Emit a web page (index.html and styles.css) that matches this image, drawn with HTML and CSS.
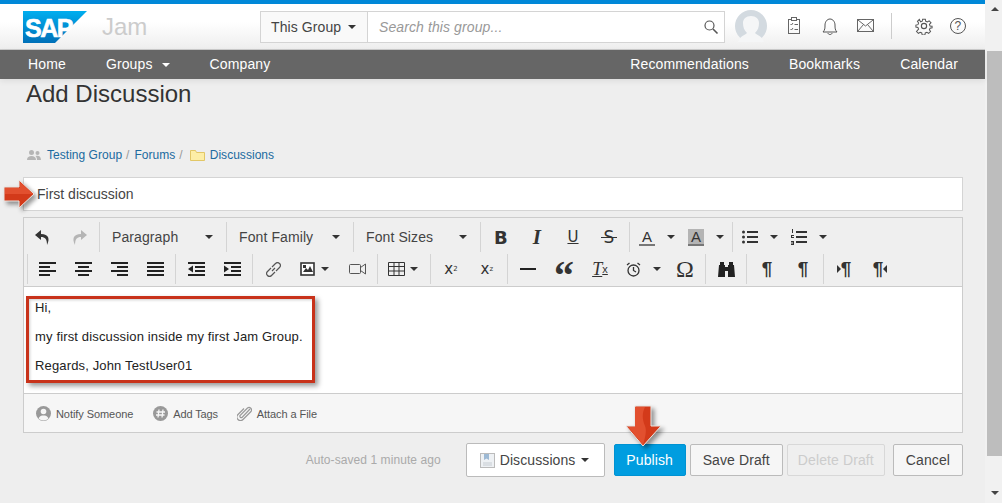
FILE: index.html
```html
<!DOCTYPE html>
<html lang="en">
<head>
    <meta charset="UTF-8">
    <meta name="viewport" content="width=device-width, initial-scale=1.0">
    <title>Add Discussion</title>
    <link rel="stylesheet" href="styles.css">
</head>
<body>
<div class="window">
    <div class="page">
        <header class="topbar">
            <svg class="logo" width="64" height="32" viewBox="0 0 64 32">
                <defs>
                    <linearGradient id="sapblue" x1="0" y1="0" x2="0" y2="1">
                        <stop offset="0" stop-color="#00aeef"/>
                        <stop offset="1" stop-color="#0070b8"/>
                    </linearGradient>
                </defs>
                <polygon points="0,0 64,0 32,32 0,32" fill="url(#sapblue)"/>
                <text x="2" y="26" class="logo-text">SAP</text>
            </svg>
            <span class="brand">Jam</span>
            <div class="search">
                <div class="search-scope">This Group <span class="caret"></span></div>
                <div class="search-input">
                    <span>Search this group...</span>
                    <svg width="16" height="16" viewBox="0 0 16 16" fill="none" stroke="#555" stroke-width="1.2"><circle cx="6.5" cy="6.5" r="4.5"/><path d="M10 10l4.5 4.5" stroke-width="1.6"/></svg>
                </div>
            </div>
            <svg class="avatar" width="32" height="32" viewBox="0 0 32 32">
                <circle cx="16" cy="16" r="16" fill="#d3dae0"/>
                <path d="M3 32c2-6 7-7 9-9-3-3-4-6-4-10 0-4 3-7 8-7s8 3 8 7c0 4-1 7-4 10 2 2 7 3 9 9z" fill="#f5f6f7"/>
            </svg>
            <div class="top-icons">
                <svg class="ti-clip" width="14" height="18" viewBox="0 0 14 18" fill="none" stroke="#666"><rect x="1.5" y="2.5" width="11" height="14"/><rect x="4.5" y="0.5" width="5" height="3" fill="#fff"/><path d="M3.5 7l1 1 1.5-2M3.5 12l1 1 1.5-2M7.5 7.5h3.500M7.5 12.500h3.500"/></svg>
                <svg class="ti-bell" width="16" height="18" viewBox="0 0 16 18" fill="none" stroke="#555"><path d="M1 15c2-2 2-4 2-7 0-3 2-6 5-6s5 3 5 6c0 3 0 5 2 7z"/><path d="M6 16c0 2 4 2 4 0"/></svg>
                <svg class="ti-mail" width="17" height="13" viewBox="0 0 17 13" fill="none" stroke="#666"><rect x="0.500" y="0.500" width="16" height="12"/><path d="M1 1l7.500 6 7.500-6M1 12l5.500-6.500M16 12l-5.500-6.500"/></svg>
                <span class="ti-sep"></span>
                <svg class="ti-gear" width="18" height="18" viewBox="0 0 24 24" fill="none" stroke="#555" stroke-width="1.500"><circle cx="12" cy="12" r="3.500"/><path d="M10 2h4l.6 3 2.400 1 2.600-1.700 2.800 2.800L20 9.700l1 2.300 3 .6v-1 3l-3 .6-1 2.400 1.700 2.600-2.800 2.800-2.600-1.700-2.400 1-.6 3h-4l-.6-3-2.400-1-2.600 1.700-2.800-2.800L4 16.600l-1-2.400-3-.6v-3l3-.6 1-2.300-1.700-2.600 2.800-2.800L7 5.900l2.400-1z" transform="translate(1.200 1.200) scale(.9)"/></svg>
                <svg class="ti-help" width="16" height="16" viewBox="0 0 16 16" fill="none" stroke="#555"><circle cx="8" cy="8" r="7.500"/><text x="8" y="12" class="help-mark">?</text></svg>
            </div>
        </header>
        <nav class="navbar">
            <a>Home</a>
            <a>Groups <span class="caret caret-white"></span></a>
            <a>Company</a>
            <span class="nav-fill"></span>
            <a>Recommendations</a>
            <a>Bookmarks</a>
            <a>Calendar</a>
        </nav>

        <main class="content">
            <h1>Add Discussion</h1>
            <div class="crumbs">
                <svg width="14" height="10" viewBox="0 0 14 10" fill="#b5b5b5"><circle cx="4.500" cy="2.500" r="2.500"/><path d="M0 10c0-3 2-4 4.500-4S9 7 9 10z"/><circle cx="10.500" cy="3" r="2"/><path d="M10 10c0-2-.5-3-1.500-4 3-1 5.500 0 5.500 4z"/></svg>
                <a>Testing Group</a><span class="slash">/</span><a>Forums</a><span class="slash">/</span>
                <svg class="folder" width="15" height="11" viewBox="0 0 15 11"><path d="M.5 10.500V.5h5l1 2h8v8z" fill="#fdeea6" stroke="#e2c766"/></svg>
                <a>Discussions</a>
            </div>
            <input class="title-input" type="text" value="First discussion">

            <div class="editor">
                <div class="toolbar">
                    <div class="tb-row">
                        <div class="tb-group first">
                            <button class="tb-btn"><svg width="16" height="15" viewBox="0 0 16 15" fill="#333"><path d="M6 0L0 5l6 5V7c4 0 6 2 6 8 3-6 2-11-6-11z"/></svg></button>
                            <button class="tb-btn"><svg width="16" height="15" viewBox="0 0 16 15" fill="#b5b5b5"><path d="M10 0l6 5-6 5V7c-4 0-6 2-6 8-3-6-2-11 6-11z"/></svg></button>
                        </div>
                        <div class="tb-group"><button class="tb-select">Paragraph<span class="caret"></span></button></div>
                        <div class="tb-group"><button class="tb-select">Font Family<span class="caret"></span></button></div>
                        <div class="tb-group"><button class="tb-select">Font Sizes<span class="caret"></span></button></div>
                        <div class="tb-group">
                            <button class="tb-btn glyph bold">B</button>
                            <button class="tb-btn glyph italic">I</button>
                            <button class="tb-btn glyph under">U</button>
                            <button class="tb-btn glyph strike">S</button>
                        </div>
                        <div class="tb-group">
                            <div class="split"><button class="tb-btn"><span class="swatch">A</span></button><span class="caret"></span></div>
                            <div class="split"><button class="tb-btn"><span class="swatch shaded">A</span></button><span class="caret"></span></div>
                        </div>
                        <div class="tb-group">
                            <div class="split"><button class="tb-btn"><svg width="16" height="14" viewBox="0 0 16 14" fill="#333"><circle cx="1.500" cy="2" r="1.500"/><circle cx="1.500" cy="7" r="1.500"/><circle cx="1.500" cy="12" r="1.500"/><path d="M5 1h11v2H5zM5 6h11v2H5zM5 11h11v2H5z"/></svg></button><span class="caret"></span></div>
                            <div class="split"><button class="tb-btn"><svg width="16" height="16" viewBox="0 0 16 16" fill="#333"><path d="M5 2h11v2H5zM5 7h11v2H5zM5 12h11v2H5zM1 0h1v4H1zM0 6h3v1H1v1h2v1H0v-1zM0 12h3v4H0v-1h2v-.5H0v-1h2V13H0z"/></svg></button><span class="caret"></span></div>
                        </div>
                    </div>
                    <div class="tb-row">
                        <div class="tb-group indent">
                            <button class="tb-btn"><svg width="17" height="14" viewBox="0 0 17 14" fill="#222"><path d="M0 0h17v2H0zM0 4h11v2H0zM0 8h17v2H0zM0 12h11v2H0z"/></svg></button>
                            <button class="tb-btn"><svg width="17" height="14" viewBox="0 0 17 14" fill="#222"><path d="M0 0h17v2H0zM3 4h11v2H3zM0 8h17v2H0zM3 12h11v2H3z"/></svg></button>
                            <button class="tb-btn"><svg width="17" height="14" viewBox="0 0 17 14" fill="#222"><path d="M0 0h17v2H0zM6 4h11v2H6zM0 8h17v2H0zM6 12h11v2H6z"/></svg></button>
                            <button class="tb-btn"><svg width="17" height="14" viewBox="0 0 17 14" fill="#222"><path d="M0 0h17v2H0zM0 4h17v2H0zM0 8h17v2H0zM0 12h17v2H0z"/></svg></button>
                        </div>
                        <div class="tb-group">
                            <button class="tb-btn"><svg width="17" height="14" viewBox="0 0 17 14" fill="#222"><path d="M0 0h17v2H0zM7 4h10v2H7zM7 8h10v2H7zM0 12h17v2H0zM5 3.500v7L0 7z"/></svg></button>
                            <button class="tb-btn"><svg width="17" height="14" viewBox="0 0 17 14" fill="#222"><path d="M0 0h17v2H0zM7 4h10v2H7zM7 8h10v2H7zM0 12h17v2H0zM0 3.500v7L5 7z"/></svg></button>
                        </div>
                        <div class="tb-group">
                            <button class="tb-btn"><svg width="15" height="15" viewBox="0 0 15 15" fill="none" stroke="#555" stroke-width="1.200"><path d="M6 9l3-3M5 6L1.500 9.500a2.500 2.500 0 0 0 4 4L9 10M6 5l3.500-3.500a2.500 2.500 0 0 1 4 4L10 9"/></svg></button>
                            <div class="split tight"><button class="tb-btn"><svg width="15" height="14" viewBox="0 0 15 14"><rect x="1" y="1" width="13" height="12" fill="#fff" stroke="#333" stroke-width="1.600"/><path d="M3 10l3-4 2 2 2-4 3 6z" fill="#333"/><path d="M3 3h3v3H3z" fill="#333"/></svg></button><span class="caret"></span></div>
                            <button class="tb-btn"><svg width="17" height="12" viewBox="0 0 17 12" fill="none" stroke="#555"><rect x="0.500" y="1.500" width="11" height="9" rx="1"/><path d="M16.500 1l-5 3.500v3l5 3.500z"/></svg></button>
                        </div>
                        <div class="tb-group">
                            <div class="split tight"><button class="tb-btn"><svg width="17" height="14" viewBox="0 0 17 14" fill="none" stroke="#333"><path d="M.5 .5h16v13H.5zM.5 4.500h16M.5 9h16M6 .5v13M11 .5v13"/></svg></button><span class="caret"></span></div>
                        </div>
                        <div class="tb-group">
                            <button class="tb-btn glyph script">x<sup>2</sup></button>
                            <button class="tb-btn glyph script">x<sub>z</sub></button>
                        </div>
                        <div class="tb-group">
                            <button class="tb-btn"><svg width="16" height="2" viewBox="0 0 16 2" fill="#222"><path d="M0 0h16v2H0z"/></svg></button>
                            <button class="tb-btn glyph quote">&#8220;</button>
                            <button class="tb-btn glyph clear">T<span>x</span></button>
                            <div class="split"><button class="tb-btn"><svg width="15" height="15" viewBox="0 0 15 15" fill="none" stroke="#333" stroke-width="1.300"><circle cx="7.500" cy="8.500" r="5.500"/><path d="M7.500 5v3.500l2.500 1.500M1 3l2.500-2M14 3l-2.500-2"/></svg></button><span class="caret"></span></div>
                            <button class="tb-btn glyph omega">&#937;</button>
                        </div>
                        <div class="tb-group">
                            <button class="tb-btn"><svg width="17" height="15" viewBox="0 0 17 15" fill="#222"><path d="M2 0h4v3h1v2h3V3h1V0h4v3h1l1 12h-7V9H7v6H0L1 3h1z"/></svg></button>
                        </div>
                        <div class="tb-group">
                            <button class="tb-btn glyph pilcrow">&#182;</button>
                            <button class="tb-btn glyph pilcrow">&#182;</button>
                        </div>
                        <div class="tb-group">
                            <button class="tb-btn glyph pilcrow"><i class="dir-left"></i>&#182;</button>
                            <button class="tb-btn glyph pilcrow">&#182;<i class="dir-right"></i></button>
                        </div>
                    </div>
                </div>
                <div class="editor-body">
                    <p>Hi,</p>
                    <p>my first discussion inside my first Jam Group.</p>
                    <p>Regards, John TestUser01</p>
                    <div class="red-box"></div>
                </div>
                <div class="editor-foot">
                    <a class="foot-notify"><svg width="15" height="15" viewBox="0 0 15 15"><circle cx="7.500" cy="7.500" r="7.500" fill="#999"/><circle cx="7.500" cy="5.500" r="2.800" fill="#f6f6f6"/><path d="M2.500 12.500c1-2.500 3-3 5-3s4 .5 5 3a7 7 0 0 1-10 0z" fill="#f6f6f6"/></svg>Notify Someone</a>
                    <a class="foot-tags"><svg width="15" height="15" viewBox="0 0 15 15"><circle cx="7.500" cy="7.500" r="7.500" fill="#999"/><path d="M6 3.500L5 11.500M10 3.500l-1 8M3.500 6h8.500M3 9h8.500" stroke="#f6f6f6" stroke-width="1.300"/></svg>Add Tags</a>
                    <a class="foot-file"><svg width="15" height="15" viewBox="0 0 15 15" fill="none" stroke="#999" stroke-width="1.200"><path d="M13 3L5 11.500a1.500 1.500 0 0 1-2-2L10.500 2a2.500 2.500 0 0 1 3.500 3.500L6 13.500a3.500 3.500 0 0 1-5-5L7 2.500"/></svg>Attach a File</a>
                </div>
            </div>

            <div class="actions">
                <span class="saved">Auto-saved 1 minute ago</span>
                <button class="btn btn-place"><svg width="15" height="15" viewBox="0 0 15 15"><rect x="0.500" y="0.500" width="14" height="14" fill="#eef1f4" stroke="#bbb"/><path d="M4 1h5v6L6.500 5.500 4 7z" fill="#9db9d4"/><path d="M3 10h9M3 12h9" stroke="#c6ccd2"/></svg>Discussions <span class="caret"></span></button>
                <button class="btn btn-primary">Publish</button>
                <button class="btn">Save Draft</button>
                <button class="btn btn-disabled">Delete Draft</button>
                <button class="btn">Cancel</button>
            </div>
        </main>

        <svg class="arrow arrow-right" width="32" height="30" viewBox="0 0 32 30">
            <path d="M1 7h15V0l15 14-15 14v-7H1z" fill="#d33a1a" stroke="#e9e4e0" stroke-width="1"/>
            <path d="M2 8h15V2l13 12H2z" fill="#e2502f"/>
        </svg>
        <svg class="arrow arrow-down" width="38" height="42" viewBox="0 0 38 42">
            <path d="M10 1h16v20h10L18 41 1 21h9z" fill="#d33a1a" stroke="#e9e4e0" stroke-width="1"/>
            <path d="M10 2h10c-3 6-3 12 0 19 2 5 0 12-2 19L3 22h7z" fill="#e2502f"/>
        </svg>
    </div>

    <div class="scrollbar">
        <span class="sb-up"></span>
        <span class="sb-thumb"></span>
        <span class="sb-down"></span>
    </div>
</div>
</body>
</html>
```

FILE: styles.css
```css
html, body {
    margin: 0;
    padding: 0;
    height: 503px;
    overflow: hidden;
}
body {
    font-family: "Liberation Sans", Arial, sans-serif;
    font-size: 14px;
    letter-spacing: 0.1px;
    color: #333;
    background-color: #eee;
}
button {
    font-family: inherit;
    letter-spacing: inherit;
}
.window {
    display: flex;
    height: 503px;
}
.page {
    position: relative;
    width: 985px;
    flex: none;
}

/* top bar */
.topbar {
    display: flex;
    align-items: center;
    box-sizing: border-box;
    height: 50px;
    padding-left: 23px;
    border-top: 4px solid #0088d8;
    border-bottom: 1px solid #ccc;
    background: linear-gradient(#fff 40%, #eee);
}
.logo {
    flex: none;
}
.logo-text {
    font-family: "Liberation Sans", sans-serif;
    font-size: 25px;
    font-weight: bold;
    fill: #fff;
    stroke: #fff;
    stroke-width: 0.6;
    letter-spacing: -1.500px;
}
.brand {
    width: 44px;
    margin-left: 15px;
    font-size: 24px;
    letter-spacing: 0;
    color: #ccc;
}
.search {
    display: flex;
    width: 465px;
    height: 32px;
    margin-left: 114px;
    box-sizing: border-box;
    border: 1px solid #d4d4d4;
    background-color: #fff;
}
.search-scope {
    display: flex;
    align-items: center;
    box-sizing: border-box;
    width: 107px;
    padding-left: 10px;
    border-right: 1px solid #d4d4d4;
    background-color: #f9f9f9;
    color: #444;
}
.search-scope .caret {
    margin-left: 7px;
}
.search-input {
    flex: 1;
    display: flex;
    align-items: center;
    justify-content: space-between;
    padding: 0 5px 0 11px;
    font-style: italic;
    color: #999;
}
.caret {
    display: inline-block;
    width: 0;
    height: 0;
    border-left: 4px solid transparent;
    border-right: 4px solid transparent;
    border-top: 4px solid #333;
    vertical-align: middle;
}
.caret-white {
    border-top-color: #fff;
    margin-left: 5px;
}
.avatar {
    margin: -2px 0 0 10px;
    flex: none;
}
.top-icons {
    display: flex;
    align-items: center;
    margin-top: -2px;
}
.ti-clip {
    margin-left: 20px;
}
.ti-bell {
    margin-left: 21px;
}
.ti-mail {
    margin-left: 19px;
}
.ti-sep {
    width: 1px;
    height: 26px;
    margin-left: 17px;
    background-color: #ccc;
}
.ti-gear {
    margin-left: 23px;
}
.ti-help {
    margin-left: 17px;
}
.help-mark {
    font-family: "Liberation Sans", sans-serif;
    font-size: 12px;
    text-anchor: middle;
    fill: #555;
    stroke: none;
}

/* nav */
.navbar {
    display: flex;
    align-items: center;
    gap: 40px;
    box-sizing: border-box;
    height: 29px;
    padding: 0 27px 2px 28px;
    background-color: #666;
    color: #fff;
    letter-spacing: 0.13px;
    box-shadow: 0 2px 6px rgba(0, 0, 0, 0.08);
}
.nav-fill {
    flex: 1;
}

/* content */
.content {
    padding: 0 22px 0 23px;
}
h1 {
    margin: 0;
    padding-left: 3px;
    font-size: 24px;
    font-weight: normal;
    line-height: 30px;
    letter-spacing: 0;
    color: #333;
}
.crumbs {
    display: flex;
    align-items: center;
    height: 16px;
    margin-top: 38px;
    padding-left: 4px;
    font-size: 12px;
    letter-spacing: 0.03px;
    color: #999;
}
.crumbs a {
    color: #206a9f;
}
.crumbs svg:first-child {
    margin-right: 6px;
}
.slash {
    margin: 0 5px 0 4px;
}
.folder {
    margin: 0 5px 0 2px;
}
.title-input {
    display: block;
    box-sizing: border-box;
    width: 940px;
    height: 34px;
    margin: 14px 0 6px;
    padding: 0 13px;
    border: 1px solid #d4d4d4;
    background-color: #fff;
    font-family: inherit;
    font-size: 14px;
    color: #444;
    outline: none;
}

/* editor */
.editor {
    box-sizing: border-box;
    height: 216px;
    border: 1px solid #ccc;
    display: flex;
    flex-direction: column;
}
.toolbar {
    box-sizing: border-box;
    height: 69px;
    padding: 4px 0 0 1px;
    border-bottom: 1px solid #ccc;
    background-color: #efefef;
}
.tb-row {
    display: flex;
    height: 30px;
    margin-bottom: 2px;
}
.tb-group {
    display: flex;
    padding: 0 2px;
    border-left: 1px solid #d4d4d4;
}
.tb-group.first {
    padding-left: 0;
    border-left: 0;
}
.tb-group.indent {
    margin-left: 2px;
    padding-left: 1px;
}
.tb-btn {
    display: flex;
    align-items: center;
    justify-content: center;
    position: relative;
    width: 36px;
    height: 30px;
    padding: 0;
    border: 0;
    background: none;
    color: #333;
}
.tb-select {
    display: flex;
    align-items: center;
    justify-content: space-between;
    width: 122px;
    height: 30px;
    padding: 0 11px 0 10px;
    border: 0;
    background: none;
    font-size: 14px;
    color: #444;
}
.split {
    display: flex;
    align-items: center;
    width: 49px;
}
.split .tb-btn {
    width: 30px;
    flex: none;
}
.split .caret {
    margin-left: 5px;
}
.split.tight {
    width: 48px;
}
.split.tight .tb-btn {
    width: 32px;
}
.split.tight .caret {
    margin-left: -2px;
}
.glyph {
    font-family: "DejaVu Sans", sans-serif;
    font-size: 16px;
    color: #333;
}
.bold {
    font-weight: bold;
    font-size: 18px;
}
.italic {
    font-style: italic;
    font-weight: bold;
    font-family: "Liberation Serif", serif;
    font-size: 21px;
}
.under {
    text-decoration: underline;
    font-size: 15px;
}
.strike {
    font-size: 17px;
}
.strike::after {
    content: "";
    position: absolute;
    left: 10px;
    right: 10px;
    top: 15px;
    height: 1px;
    background-color: #333;
}
.swatch {
    display: block;
    box-sizing: border-box;
    width: 16px;
    height: 17px;
    border-bottom: 2px solid #777;
    font-size: 15px;
    line-height: 15px;
    text-align: center;
    color: #333;
}
.shaded {
    background-color: #b4b4b4;
}
.script {
    font-size: 15px;
}
.script sup, .script sub {
    font-size: 7px;
}
.quote {
    font-family: "Liberation Serif", serif;
    font-weight: bold;
    font-size: 40px;
    line-height: 50px;
    padding-top: 14px;
}
.clear {
    font-family: "Liberation Serif", serif;
    font-style: italic;
    font-size: 18px;
    text-decoration: underline;
}
.clear span {
    font-size: 11px;
    font-style: normal;
    font-family: "Liberation Sans", sans-serif;
}
.omega {
    font-family: "Liberation Serif", serif;
    font-size: 24px;
}
.pilcrow {
    font-family: "Liberation Sans", sans-serif;
    font-weight: bold;
    font-size: 19px;
}
.dir-left, .dir-right {
    display: inline-block;
    width: 0;
    height: 0;
    border-top: 4px solid transparent;
    border-bottom: 4px solid transparent;
}
.dir-left {
    border-left: 4px solid #333;
}
.dir-right {
    border-right: 4px solid #333;
}
.editor-body {
    position: relative;
    box-sizing: border-box;
    flex: 1;
    padding: 13px 11px 0;
    background-color: #fff;
    font-size: 13px;
    color: #222;
}
.editor-body p {
    margin: 0 0 14px;
    line-height: 15px;
    letter-spacing: 0.15px;
}
.editor-foot {
    display: flex;
    align-items: center;
    box-sizing: border-box;
    height: 39px;
    padding: 1px 0 0 12px;
    border-top: 1px solid #ccc;
    background-color: #f6f6f6;
    font-size: 11px;
    letter-spacing: -0.07px;
    color: #555;
}
.editor-foot a {
    display: flex;
    align-items: center;
    gap: 5px;
}
.foot-notify {
    margin-right: 20px;
}
.foot-tags {
    gap: 4px;
    margin-right: 19px;
    letter-spacing: -0.15px;
}
.foot-file {
    gap: 5px;
}

/* annotations */
.red-box {
    position: absolute;
    left: 2px;
    top: 9px;
    width: 283px;
    height: 81px;
    border: 3px solid #c8321a;
    box-shadow: 3px 3px 5px rgba(0, 0, 0, 0.4), inset 3px 3px 3px -2px rgba(0, 0, 0, 0.2);
}
.arrow {
    position: absolute;
    filter: drop-shadow(3px 3px 2px rgba(0, 0, 0, 0.4));
}
.arrow-right {
    left: 3px;
    top: 180px;
}
.arrow-down {
    left: 625px;
    top: 405px;
}

/* actions */
.actions {
    display: flex;
    align-items: center;
    justify-content: flex-end;
    gap: 4px;
    margin-top: 11px;
    height: 32px;
}
.saved {
    margin-right: 21px;
    font-size: 12px;
    letter-spacing: 0.07px;
    color: #aaa;
}
.btn {
    box-sizing: border-box;
    height: 32px;
    padding: 0 12px;
    border: 1px solid #bbb;
    border-radius: 2px;
    background-color: #f6f6f6;
    font-size: 14px;
    color: #444;
}
.btn-place {
    display: flex;
    align-items: center;
    gap: 5px;
    width: 139px;
    height: 34px;
    margin-right: 5px;
    padding: 0 13px;
    background-color: #fff;
}
.btn-primary {
    width: 72px;
    padding: 0;
    border-color: #0092d2;
    background-color: #009de0;
    color: #fff;
}
.btn-place .caret {
    margin-left: 1px;
}
.btn-disabled {
    width: 98px;
    padding: 0;
    margin-right: 4px;
    border-color: #d8d8d8;
    background-color: #efefef;
    color: #ccc;
}

/* scrollbar */
.scrollbar {
    flex: 1;
    display: flex;
    flex-direction: column;
    align-items: center;
    background-color: #f1f1f1;
}
.sb-up, .sb-down {
    width: 0;
    height: 0;
    margin-left: 2px;
    border-left: 4px solid transparent;
    border-right: 4px solid transparent;
}
.sb-up {
    margin-top: 7px;
    border-bottom: 4px solid #444;
}
.sb-thumb {
    align-self: flex-end;
    width: 15px;
    height: 405px;
    margin-top: 40px;
    background-color: #bdbdbd;
}
.sb-down {
    margin-top: 35px;
    border-top: 4px solid #444;
}
```
